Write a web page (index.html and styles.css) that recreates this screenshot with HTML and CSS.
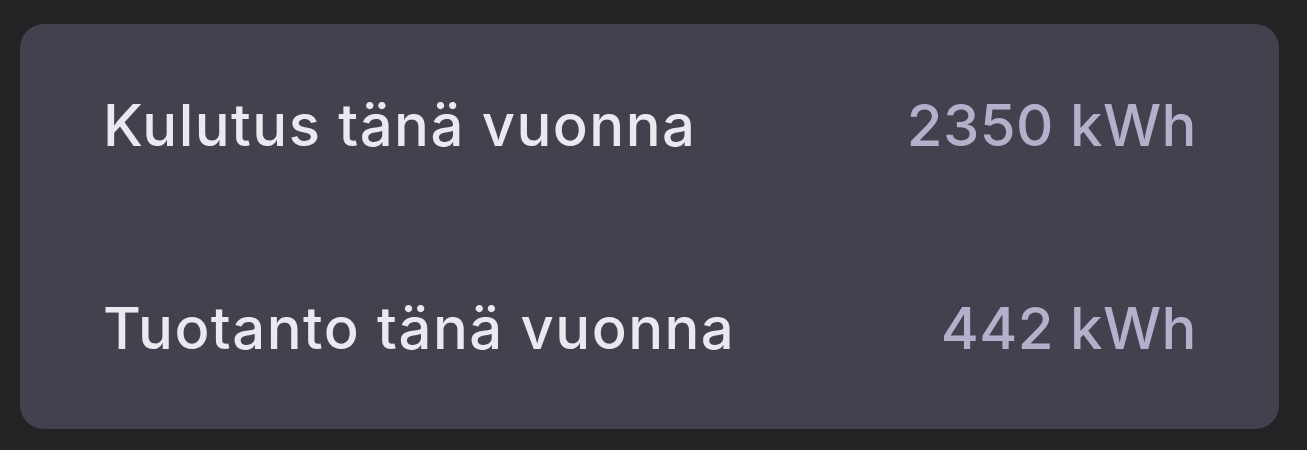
FILE: index.html
```html
<!DOCTYPE html>
<html>
<head>
<meta charset="utf-8">
<link rel="stylesheet" href="styles.css">
</head>
<body>
<div class="card">
  <div class="row">
    <span class="label">Kulutus tänä vuonna</span>
    <span class="value">2350 kWh</span>
  </div>
  <div class="row">
    <span class="label">Tuotanto tänä vuonna</span>
    <span class="value">442 kWh</span>
  </div>
</div>
</body>
</html>
```
FILE: styles.css
```css
html, body {
  margin: 0;
  background: #232325;
}
body {
  padding: 24px 28px 0 20px;
  font-family: "Inter", "Noto Sans", sans-serif;
}
.card {
  width: 1259px;
  height: 405px;
  box-sizing: border-box;
  background: #42424e;
  border-radius: 24px;
  padding: 0 82px 0 83px;
  display: flex;
  flex-direction: column;
}
.row {
  flex: 1;
  display: flex;
  align-items: center;
  justify-content: space-between;
  font-size: 58px;
  font-weight: 450;
}
.label {
  color: #e9e9ef;
  letter-spacing: 1.45px;
}
.value {
  color: #b4b0cc;
  letter-spacing: 0.5px;
}
```
